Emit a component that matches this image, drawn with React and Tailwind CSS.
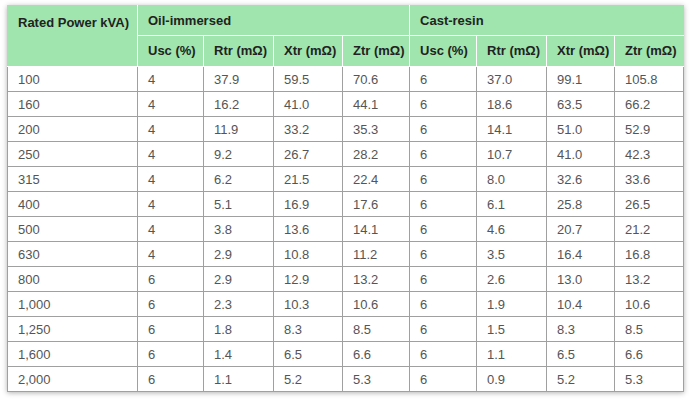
import React from 'react';

const rows = [
  ['100', '4', '37.9', '59.5', '70.6', '6', '37.0', '99.1', '105.8'],
  ['160', '4', '16.2', '41.0', '44.1', '6', '18.6', '63.5', '66.2'],
  ['200', '4', '11.9', '33.2', '35.3', '6', '14.1', '51.0', '52.9'],
  ['250', '4', '9.2', '26.7', '28.2', '6', '10.7', '41.0', '42.3'],
  ['315', '4', '6.2', '21.5', '22.4', '6', '8.0', '32.6', '33.6'],
  ['400', '4', '5.1', '16.9', '17.6', '6', '6.1', '25.8', '26.5'],
  ['500', '4', '3.8', '13.6', '14.1', '6', '4.6', '20.7', '21.2'],
  ['630', '4', '2.9', '10.8', '11.2', '6', '3.5', '16.4', '16.8'],
  ['800', '6', '2.9', '12.9', '13.2', '6', '2.6', '13.0', '13.2'],
  ['1,000', '6', '2.3', '10.3', '10.6', '6', '1.9', '10.4', '10.6'],
  ['1,250', '6', '1.8', '8.3', '8.5', '6', '1.5', '8.3', '8.5'],
  ['1,600', '6', '1.4', '6.5', '6.6', '6', '1.1', '6.5', '6.6'],
  ['2,000', '6', '1.1', '5.2', '5.3', '6', '0.9', '5.2', '5.3'],
];

const widths = [130, 66, 70, 69, 67, 67, 70, 68, 69];
const sub = ['Usc (%)', 'Rtr (mΩ)', 'Xtr (mΩ)', 'Ztr (mΩ)'];

export default function App() {
  return (
    <div className="w-[693px] h-[402px] bg-white pt-[5px] pl-[7px]" style={{ fontFamily: '"Liberation Sans", Arial, sans-serif' }}>
      <table className="border-collapse table-fixed w-[676px] text-[13px] shadow-[0_1px_5px_rgba(0,0,0,0.3)]">
        <colgroup>
          {widths.map((w, i) => (
            <col key={i} style={{ width: `${w}px` }} />
          ))}
        </colgroup>
        <thead>
          <tr className="h-[30px] bg-[#9fe5ad] text-[#222]">
            <th rowSpan={2} className="border border-white border-l-[#9fe5ad] border-t-[#9fe5ad] pl-[10px] pr-0 align-top pt-[7px] text-left font-semibold whitespace-nowrap">
              Rated Power kVA)
            </th>
            <th colSpan={4} className="border border-white border-t-[#9fe5ad] px-[10px] text-left font-semibold">
              Oil-immersed
            </th>
            <th colSpan={4} className="border border-white border-t-[#9fe5ad] border-r-[#9fe5ad] px-[10px] text-left font-semibold">
              Cast-resin
            </th>
          </tr>
          <tr className="h-[31px] bg-[#9fe5ad] text-[#222]">
            {[...sub, ...sub].map((s, i) => (
              <th key={i} className={`border border-white px-[10px] text-left font-semibold whitespace-nowrap ${i === 7 ? 'border-r-[#9fe5ad]' : ''}`}>
                {s}
              </th>
            ))}
          </tr>
        </thead>
        <tbody className="text-[#555]">
          {rows.map((r, ri) => (
            <tr key={ri} className="h-[25px]">
              {r.map((c, ci) => (
                <td key={ci} className="border border-[#a0a0a0] px-[10px] py-0 leading-none">
                  {c}
                </td>
              ))}
            </tr>
          ))}
        </tbody>
      </table>
    </div>
  );
}
